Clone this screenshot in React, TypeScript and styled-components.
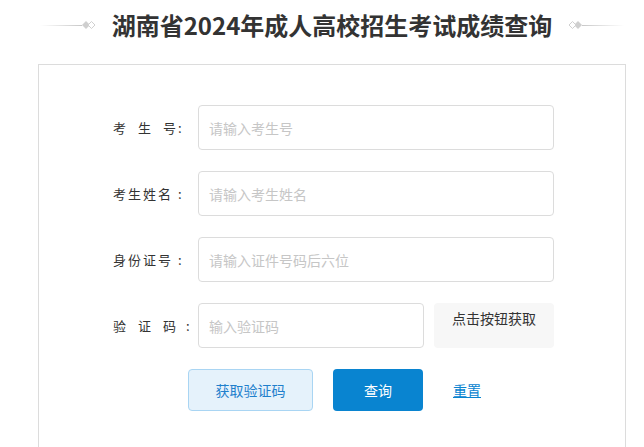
import React from 'react';
import styled, { createGlobalStyle } from 'styled-components';

const GlobalStyle = createGlobalStyle`
  html, body {
    margin: 0;
    padding: 0;
    background: #fff;
  }
  body {
    font-family: "Microsoft YaHei", "Noto Sans CJK SC", "Noto Sans", sans-serif;
    color: #333;
  }
`;

const Page = styled.div`
  width: 644px;
  height: 447px;
  overflow: hidden;
`;

const Header = styled.header`
  height: 50px;
  display: flex;
  align-items: center;
  justify-content: center;
  gap: 16px;
  padding-left: 20px;
`;

const Title = styled.h1`
  margin: 0;
  font-size: 24px;
  font-weight: bold;
  color: #333;
  line-height: 1;
`;

const Ornament = styled.div<{ $flip?: boolean }>`
  display: flex;
  align-items: center;
  flex-direction: ${(p) => (p.$flip ? 'row-reverse' : 'row')};
  width: 56px;
`;

const OrnamentLine = styled.div<{ $flip?: boolean }>`
  flex: 1;
  height: 1px;
  background: linear-gradient(
    ${(p) => (p.$flip ? 'to left' : 'to right')},
    rgba(200, 200, 200, 0),
    #c8c8c8
  );
`;

const Card = styled.section`
  margin: 14px 0 0 38px;
  width: 588px;
  height: 400px;
  border: 1px solid #dcdcdc;
  border-bottom: none;
  padding: 40px 0 0 74px;
  box-sizing: border-box;
`;

const Form = styled.div`
  display: flex;
  flex-direction: column;
  gap: 21px;
`;

const Row = styled.div`
  display: flex;
  align-items: center;
  height: 45px;
`;

const Label = styled.label`
  width: 85px;
  flex: none;
  display: flex;
  align-items: center;
  font-size: 13px;
  color: #333;
`;

const Name = styled.span<{ $gap: number }>`
  display: flex;
  gap: ${(p) => p.$gap}px;
`;

const Colon = styled.span<{ $offset: number }>`
  margin-left: ${(p) => p.$offset}px;
`;

const Input = styled.input<{ $width: number }>`
  width: ${(p) => p.$width}px;
  height: 45px;
  box-sizing: border-box;
  border: 1px solid #dcdcdc;
  border-radius: 4px;
  padding: 0 10px;
  font-family: inherit;
  font-size: 14px;
  color: #333;
  outline: none;
  &::placeholder {
    color: #c6c6c6;
  }
`;

const CodeBox = styled.div`
  margin-left: 10px;
  width: 120px;
  height: 45px;
  box-sizing: border-box;
  border-radius: 4px;
  background: #f7f7f7;
  text-align: center;
  padding-top: 5px;
  font-size: 14px;
  color: #333;
`;

const Actions = styled.div`
  display: flex;
  align-items: center;
  margin-top: 21px;
  padding-left: 75px;
`;

const GhostButton = styled.button`
  width: 125px;
  height: 42px;
  box-sizing: border-box;
  border: 1px solid #a9d5f3;
  border-radius: 4px;
  background: #e5f2fb;
  color: #1f80cc;
  font-family: inherit;
  font-size: 14px;
  cursor: pointer;
`;

const PrimaryButton = styled.button`
  margin-left: 20px;
  width: 90px;
  height: 42px;
  border: none;
  border-radius: 4px;
  background: #0984d0;
  color: #fff;
  font-family: inherit;
  font-size: 14px;
  cursor: pointer;
`;

const LinkButton = styled.a`
  margin-left: 30px;
  font-size: 14px;
  color: #0984d0;
  text-decoration: underline;
  cursor: pointer;
`;

const Diamonds: React.FC<{ flip?: boolean }> = ({ flip }) => (
  <svg width="14" height="10" viewBox="0 0 14 10" style={flip ? { transform: 'scaleX(-1)' } : undefined}>
    <path d="M4 1 L8 5 L4 9 L0 5 Z" fill="#cfcfcf" />
    <path d="M9.5 1.5 L13 5 L9.5 8.5 L6 5 Z" fill="#fff" stroke="#d0d0d0" strokeWidth="1" />
  </svg>
);

type Field = {
  chars: string[];
  gap: number;
  colon: number;
  placeholder: string;
  width: number;
  code?: boolean;
};

const fields: Field[] = [
  { chars: ['考', '生', '号'], gap: 12, colon: 2, placeholder: '请输入考生号', width: 356 },
  { chars: ['考', '生', '姓', '名'], gap: 2, colon: 7, placeholder: '请输入考生姓名', width: 356 },
  { chars: ['身', '份', '证', '号'], gap: 2, colon: 7, placeholder: '请输入证件号码后六位', width: 356 },
  { chars: ['验', '证', '码'], gap: 12, colon: 10, placeholder: '输入验证码', width: 226, code: true },
];

const App: React.FC = () => {
  return (
    <Page>
      <GlobalStyle />
      <Header>
        <Ornament>
          <OrnamentLine />
          <Diamonds />
        </Ornament>
        <Title>湖南省2024年成人高校招生考试成绩查询</Title>
        <Ornament $flip>
          <OrnamentLine $flip />
          <Diamonds flip />
        </Ornament>
      </Header>
      <Card>
        <Form>
          {fields.map((f) => (
            <Row key={f.placeholder}>
              <Label>
                <Name $gap={f.gap}>
                  {f.chars.map((c, i) => (
                    <span key={i}>{c}</span>
                  ))}
                </Name>
                <Colon $offset={f.colon}>:</Colon>
              </Label>
              <Input $width={f.width} placeholder={f.placeholder} />
              {f.code && <CodeBox>点击按钮获取</CodeBox>}
            </Row>
          ))}
        </Form>
        <Actions>
          <GhostButton>获取验证码</GhostButton>
          <PrimaryButton>查询</PrimaryButton>
          <LinkButton>重置</LinkButton>
        </Actions>
      </Card>
    </Page>
  );
};

export default App;
